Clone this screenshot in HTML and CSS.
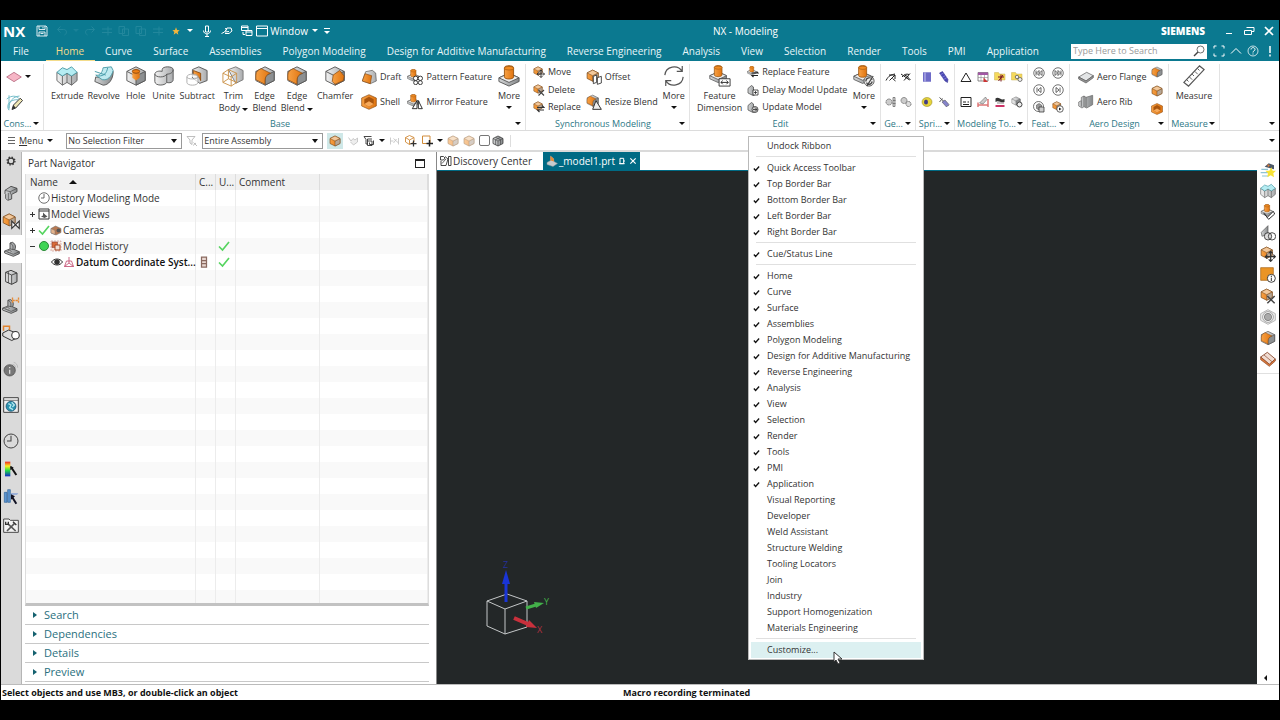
FILE: index.html
```html
<!DOCTYPE html>
<html lang="en">
<head>
<meta charset="utf-8">
<title>NX - Modeling</title>
<link rel="stylesheet" href="styles.css">
</head>
<body>
<svg class="defs" aria-hidden="true">
  <defs>
    <linearGradient id="gl" x1="0" x2="1"><stop offset="0" stop-color="#f2f2f2"/><stop offset="1" stop-color="#a9abad"/></linearGradient>
    <linearGradient id="gd" x1="0" x2="1"><stop offset="0" stop-color="#d4d6d7"/><stop offset="1" stop-color="#85888a"/></linearGradient>
    <linearGradient id="go" x1="0" x2="1"><stop offset="0" stop-color="#f7a145"/><stop offset="1" stop-color="#e0740f"/></linearGradient>
    <linearGradient id="heat" x1="0" y1="0" x2="0" y2="1"><stop offset="0" stop-color="#e22"/><stop offset=".3" stop-color="#fe2"/><stop offset=".6" stop-color="#2d4"/><stop offset="1" stop-color="#12c"/></linearGradient>
  </defs>
  <symbol id="extrude" viewBox="0 0 24 24"><path d="M1 8v9l6 5 5-3 5 3 6-5V8l-6 4-5-3-5 3z" fill="url(#gl)" stroke="#666"/><path d="M1 8l6-5 5 2 5-3 6 6-6 4-5-3-5 3z" fill="#b5ecf2" stroke="#4c9aa6"/><path d="M7 12v10M12 9v10M17 12v10" stroke="#666" fill="none"/></symbol>
  <symbol id="revolve" viewBox="0 0 24 24"><path d="M3 13c5 2 9-1 10-9l9 3c0 9-5 15-11 15L2 18z" fill="url(#gd)" stroke="#555"/><path d="M3 11c4 1 7-2 8-8l9-1 2 4c-2 7-6 11-12 10z" fill="#bfeaf0" stroke="#4c9aa6"/><path d="M2 7l12 4M6 12c6 0 9-3 10-9" stroke="#3f97a5" fill="none"/></symbol>
  <symbol id="cube" viewBox="0 0 24 24"><path d="M12 2l10 5v10l-10 5-10-5V7z" fill="url(#gl)" stroke="#555"/><path d="M12 12l10-5v10l-10 5z" fill="#8d9092" stroke="#555"/><path d="M2 7l10 5" stroke="#555"/></symbol>
  <symbol id="dcube" viewBox="0 0 24 24"><path d="M12 2l10 5v10l-10 5-10-5V7z" fill="url(#gd)" stroke="#333" stroke-width="1.500"/><path d="M2 7l10 5 10-5M12 12v10M7 4.500l10 5v10M17 4.500l-10 5v10" fill="none" stroke="#333"/></symbol>
  <symbol id="ocube" viewBox="0 0 24 24"><path d="M12 2l10 5v10l-10 5-10-5V7z" fill="url(#go)" stroke="#7b4a1b" stroke-width="1.300"/><path d="M12 12l10-5v10l-10 5z" fill="#b5a697" stroke="#7b4a1b"/><path d="M12 2l10 5-10 5L2 7z" fill="#f2c89b" stroke="#7b4a1b"/></symbol>
  <symbol id="hole" viewBox="0 0 24 24"><use href="#cube"/><path d="M8 6l4-2 4 2v8l-4 3-4-3z" fill="url(#go)"/><ellipse cx="12" cy="7" rx="4" ry="2" fill="#ee7d12" stroke="#8a4a10"/></symbol>
  <symbol id="unite" viewBox="0 0 24 24"><path d="M2 10c0-3 5-4 8-3V5c0-4 12-4 12 0v11c0 3-4 4-7 3-2 4-13 4-13-1z" fill="url(#gl)" stroke="#555"/><path d="M2 10c1 4 11 4 13 0 4 0 7-2 7-5" fill="none" stroke="#555"/><path d="M15 10v9" stroke="#555"/></symbol>
  <symbol id="subtract" viewBox="0 0 24 24"><path d="M7 5l7-3 9 4v11l-8 3-8-6z" fill="url(#gl)" stroke="#555"/><path d="M8 6l8 3v8c-1-4-4-6-8-6z" fill="url(#go)" stroke="#8a4a10"/><path d="M1 13c0-4 12-4 12 0v6c0 4-12 4-12 0zM1 13c0 3 12 3 12 0" fill="#fff" fill-opacity=".7" stroke="#aaa"/></symbol>
  <symbol id="trim" viewBox="0 0 24 24"><path d="M7 5l8-3 8 4v10l-8 4z" fill="url(#gl)" stroke="#777"/><path d="M1 9l6-4 9 4v10l-6 4-9-4zM1 9l9 4 6-4M10 13v10M7 5v10l9 4M7 15l-6 4" fill="none" stroke="#c99145"/></symbol>
  <symbol id="blend" viewBox="0 0 24 24"><use href="#cube"/><path d="M2 11c0-4 3-6 6-7l10 5c-4 1-6 4-6 8v4L2 16z" fill="url(#go)" stroke="#8a4a10" stroke-width=".8"/></symbol>
  <symbol id="chamfer" viewBox="0 0 24 24"><use href="#cube"/><path d="M10 11l7-5 5 6-1 5-9 4-3-3z" fill="url(#go)" stroke="#8a4a10" stroke-width=".8"/></symbol>
  <symbol id="draft" viewBox="0 0 24 24"><path d="M7 4l10-2 5 4 1 12-9 4-12-4z" fill="url(#gl)" stroke="#555"/><path d="M6 7l10 3-2 12-12-4z" fill="url(#go)" stroke="#8a4a10"/></symbol>
  <symbol id="shell" viewBox="0 0 24 24"><path d="M12 1l11 5v12l-11 5-11-5V6z" fill="url(#go)" stroke="#8a4a10"/><path d="M12 4l7 4v7l-7 4-7-4V8z" fill="#a9550d"/><path d="M5 15l7-4 7 4-7 4z" fill="#f6a95a"/></symbol>
  <symbol id="boss" viewBox="0 0 24 24"><path d="M1 14l11-5 11 5v4l-11 5-11-5z" fill="url(#gd)" stroke="#555"/><path d="M1 14l11 5 11-5-11-5z" fill="#eee" stroke="#555"/><path d="M7 3c0-3 10-3 10 0v10c0 3-10 3-10 0z" fill="url(#go)" stroke="#9b5510"/><ellipse cx="12" cy="3.500" rx="5" ry="2" fill="#f28d24" stroke="#9b5510" stroke-width=".7"/></symbol>
  <symbol id="pattern" viewBox="0 0 24 24"><use href="#boss" width="19" height="19"/><g fill="#fff" stroke="#222" stroke-width="1.300"><circle cx="13" cy="14" r="3.300"/><circle cx="20" cy="14" r="3.300"/><circle cx="13" cy="20.500" r="3"/><circle cx="20" cy="20.500" r="3"/></g></symbol>
  <symbol id="mirror" viewBox="0 0 24 24"><use href="#boss" width="19" height="19"/><path d="M15 10v12H8zM17 10v12h6z" fill="#fff" stroke="#222" stroke-width="1.400"/></symbol>
  <symbol id="move" viewBox="0 0 24 24"><use href="#ocube" width="20" height="20"/><path d="M16 8v15M8 16h15M13 11l3-3 3 3M13 20l3 3 3-3M11 13l-3 3 3 3M20 13l3 3-3 3" stroke="#333" stroke-width="1.800" fill="none"/></symbol>
  <symbol id="delete" viewBox="0 0 24 24"><use href="#ocube" width="20" height="20"/><path d="M11 12l11 11M22 12l-11 11" stroke="#444" stroke-width="2.200"/></symbol>
  <symbol id="replace" viewBox="0 0 24 24"><use href="#ocube" width="20" height="20"/><path d="M8 13h14l-4-4M22 18H9l4 4" stroke="#333" stroke-width="2.300" fill="none"/></symbol>
  <symbol id="offset" viewBox="0 0 24 24"><use href="#ocube" width="20" height="20"/><path d="M11 11l5-2v11l-5 2zM17 13l6-2v10l-6 2z" fill="#fff" stroke="#333" stroke-width="1.300"/></symbol>
  <symbol id="resize" viewBox="0 0 24 24"><use href="#blend" width="20" height="20"/><path d="M15 10l8 13H10z" fill="#eee" stroke="#333" stroke-width="1.500"/></symbol>
  <symbol id="cycle" viewBox="0 0 24 24"><path d="M2 11C3 1 16-1 21 7M21 1v6h-6M22 13c-1 10-14 12-19 4M3 23v-6h6" fill="none" stroke="#555" stroke-width="1.300"/></symbol>
  <symbol id="fdim" viewBox="0 0 24 24"><use href="#boss" width="20" height="20"/><path d="M11 15h12v8H11z" fill="#fff" stroke="#333"/><path d="M13 19h8M15 17l-2 2 2 2M19 17l2 2-2 2" fill="none" stroke="#222"/></symbol>
  <symbol id="fmore" viewBox="0 0 24 24"><use href="#boss" width="21" height="21"/><circle cx="17.500" cy="17.500" r="5.500" fill="#eee" stroke="#555"/><path d="M14 18c0-5 6-5 7-2M21 18c-1 4-6 4-6 1M22 12l-7 11" stroke="#444" fill="none" stroke-width="1.300"/></symbol>
  <symbol id="ofeat" viewBox="0 0 24 24"><use href="#boss" width="19" height="19"/><path d="M9 14h13l-3-3M22 19H10l3 3" stroke="#222" stroke-width="2.300" fill="none"/></symbol>
  <symbol id="gpart" viewBox="0 0 24 24"><path d="M2 9l7-6 4 3v6l7 3v5l-8 3-10-5z" fill="url(#gd)" stroke="#444" stroke-width="1.400"/><path d="M12 12h10v10H12z" fill="#fff" stroke="#222" stroke-width="1.500"/><path d="M14 17h6M17 14v6" stroke="#222" stroke-width="1.500"/></symbol>
  <symbol id="gpart2" viewBox="0 0 24 24"><path d="M2 9l7-6 4 3v6l7 3v5l-8 3-10-5z" fill="url(#gd)" stroke="#444" stroke-width="1.400"/><circle cx="16" cy="17" r="6" fill="#ccc" stroke="#333" stroke-width="1.500"/><path d="M12 17h8M16 13l4 4-4 4" fill="none" stroke="#222" stroke-width="1.500"/></symbol>
  <symbol id="plane" viewBox="0 0 24 24"><path d="M1 12l11-7 11 7-11 7z" fill="#f6b6c6" stroke="#a54e68"/></symbol>
  <symbol id="sketch" viewBox="0 0 24 24"><path d="M4 3v19M4 20C4 11 9 5 18 4M1 8c6-5 13-5 17 0M4 23c-5-7 2-15 12-14" fill="none" stroke="#69b7c4" stroke-width="1.200"/><path d="M8 22l2-6L19 7l3 3-9 10z" fill="#efe6b4" stroke="#333" stroke-width="1.300"/><path d="M8 22l2-6 3 4z" fill="#333"/></symbol>
  <symbol id="curveed" viewBox="0 0 24 24"><path d="M2 19C8 8 12 8 20 6M8 8h12v8M20 8L9 19M15 15l6 5" fill="none" stroke="#222" stroke-width="2"/></symbol>
  <symbol id="curvex" viewBox="0 0 24 24"><path d="M2 6l17 12M4 12c4-5 9-7 14-5M20 5L8 19M15 12l6 6M9 8l8 4" fill="none" stroke="#222" stroke-width="2"/></symbol>
  <symbol id="helix" viewBox="0 0 24 24"><circle cx="8" cy="12" r="6" fill="#ccc" stroke="#777" stroke-width="2" stroke-dasharray="3 1"/><path d="M16 3h4v18h-4zM16 9h5M15 15h6" fill="#ddd" stroke="#666" stroke-width="1.500"/></symbol>
  <symbol id="gears" viewBox="0 0 24 24"><circle cx="8" cy="9" r="6" fill="#ccc" stroke="#777" stroke-width="2" stroke-dasharray="3 1"/><circle cx="17" cy="16" r="5" fill="#ddd" stroke="#666" stroke-width="2" stroke-dasharray="2 1"/></symbol>
  <symbol id="spring" viewBox="0 0 24 24"><path d="M4 3h16v18H4z" fill="#8482d6"/><path d="M4 4h16M4 8h16M4 12h16M4 16h16M4 20h16" stroke="#4a46b0" stroke-width="1.500"/><path d="M8 3v18" stroke="#c7c5f2" stroke-width="2"/></symbol>
  <symbol id="spring2" viewBox="0 0 24 24"><path d="M3 4l6-3 11 16-1 6-5-3z" fill="#4b49b5" stroke="#2a2886"/><path d="M4 8l7-4M8 13l7-4M11 17l7-4" stroke="#aaa8ee"/></symbol>
  <symbol id="ring" viewBox="0 0 24 24"><ellipse cx="12" cy="12" rx="10" ry="9" fill="#e7d43b" stroke="#8a7d18"/><ellipse cx="10" cy="12" rx="4" ry="5" fill="#423d85"/></symbol>
  <symbol id="springx" viewBox="0 0 24 24"><path d="M3 3l18 16M3 12l6-7" stroke="#555" stroke-width="2"/><path d="M8 12l6-4 8 9-5 5z" fill="#8583ca" stroke="#444"/></symbol>
  <symbol id="tri" viewBox="0 0 24 24"><path d="M12 4l10 17H2z" fill="none" stroke="#222" stroke-width="2"/></symbol>
  <symbol id="sheet" viewBox="0 0 24 24"><path d="M2 3h20v17H2z" fill="#fff" stroke="#666" stroke-width="1.500"/><path d="M2 3h20v5H2z" fill="#a257a4"/><path d="M2 13h20M8 8v12M15 8v12" stroke="#777"/><path d="M13 13l9 9h-9z" fill="#c33"/></symbol>
  <symbol id="folder" viewBox="0 0 24 24"><path d="M1 3h8l2 3h11v12H1z" fill="#f5d95c" stroke="#c9b254"/><path d="M14 7v14M8 12h12M18 8l-9 12" stroke="#712" stroke-width="2"/></symbol>
  <symbol id="folder2" viewBox="0 0 24 24"><path d="M1 3h8l2 3h11v12H1z" fill="#f5d95c" stroke="#c9b254"/><circle cx="12" cy="12" r="3.500" fill="#eee" stroke="#555" stroke-width="1.500"/><circle cx="18" cy="17" r="4" fill="#eee" stroke="#555" stroke-width="1.500"/></symbol>
  <symbol id="form" viewBox="0 0 24 24"><path d="M2 3h20v18H2z" fill="#fff" stroke="#222" stroke-width="2"/><path d="M6 12h6M6 17h12M15 12h3" stroke="#222" stroke-width="2"/></symbol>
  <symbol id="dimred" viewBox="0 0 24 24"><path d="M2 13v9M22 6v16M3 18h18" stroke="#c33" stroke-width="2"/><path d="M5 14L17 2l3 5-8 9z" fill="#ccc" stroke="#555"/></symbol>
  <symbol id="stamp" viewBox="0 0 24 24"><path d="M3 5c6-5 11 5 18 1v6c-7 3-12-5-18 0z" fill="#333"/><path d="M6 14h14" stroke="#888" stroke-width="2"/><path d="M3 20h18" stroke="#c36" stroke-width="4"/></symbol>
  <symbol id="cubegear" viewBox="0 0 24 24"><use href="#cube" width="20" height="20"/><circle cx="17" cy="17" r="5" fill="#eee" stroke="#444" stroke-width="2"/></symbol>
  <symbol id="first" viewBox="0 0 24 24"><circle cx="12" cy="12" r="10.500" fill="#fff" stroke="#444" stroke-width="1.500"/><path d="M6 7v10M12 7l-5 5 5 5zM18 7l-5 5 5 5z" fill="none" stroke="#333" stroke-width="1.500"/></symbol>
  <symbol id="last" viewBox="0 0 24 24"><circle cx="12" cy="12" r="10.500" fill="#fff" stroke="#444" stroke-width="1.500"/><path d="M18 7v10M12 7l5 5-5 5zM6 7l5 5-5 5z" fill="none" stroke="#333" stroke-width="1.500"/></symbol>
  <symbol id="prev" viewBox="0 0 24 24"><circle cx="12" cy="12" r="10.500" fill="#fff" stroke="#444" stroke-width="1.500"/><path d="M8 7v10M16 7l-6 5 6 5z" fill="none" stroke="#333" stroke-width="1.500"/></symbol>
  <symbol id="next" viewBox="0 0 24 24"><circle cx="12" cy="12" r="10.500" fill="#fff" stroke="#444" stroke-width="1.500"/><path d="M16 7v10M8 7l6 5-6 5z" fill="none" stroke="#333" stroke-width="1.500"/></symbol>
  <symbol id="playcube" viewBox="0 0 24 24"><use href="#ocube" width="19" height="19"/><circle cx="16" cy="16" r="6.500" fill="#fff" stroke="#333" stroke-width="1.500"/><path d="M14 13v6l5-3z" fill="#222"/></symbol>
  <symbol id="ringcube" viewBox="0 0 24 24"><circle cx="11" cy="11" r="10" fill="#fff" stroke="#444" stroke-width="1.500"/><path d="M7 8l5-3 5 3v7l-5 3-5-3z" fill="#999" stroke="#444"/><path d="M12 12h10v10H12z" fill="#ccc" stroke="#333" stroke-width="1.500"/></symbol>
  <symbol id="flange" viewBox="0 0 24 24"><path d="M1 12l12-7 10 5-11 8z" fill="#e3e5e6" stroke="#555"/><path d="M1 12v3l11 6 11-8v-3l-11 8z" fill="#999" stroke="#555"/></symbol>
  <symbol id="rib" viewBox="0 0 24 24"><path d="M1 12l4-2V5l4-2 3 2 10-3v14l-9 5-4-2-3 2-5-3z" fill="url(#gd)" stroke="#666"/><path d="M9 3v16M12 5v15M5 10v9" stroke="#555"/></symbol>
  <symbol id="ruler" viewBox="0 0 24 24"><path d="M1 19L18 1l5 4L6 23z" fill="#fff" stroke="#555" stroke-width="1.300"/><path d="M4 16l2 2M7 13l3 3M10 10l2 2M13 7l3 3M16 4l2 2" stroke="#555"/></symbol>
  <symbol id="save" viewBox="0 0 24 24"><path d="M2 2h18l2 2v18H2zM6 2v7h12V2M6 22v-8h12v8M9 17h6M14 4v3" fill="none" stroke="#fff" stroke-width="1.700"/></symbol>
  <symbol id="mic" viewBox="0 0 24 24"><path d="M9 2h6v12H9zM5 11c0 9 14 9 14 0M12 18v5M8 23h8" fill="none" stroke="#fff" stroke-width="2"/></symbol>
  <symbol id="hand" viewBox="0 0 24 24"><path d="M1 17l6-3 5-6-4-1M8 17h8l6-5-2-6h-8M12 6l-3 6M8 14l8-1" fill="none" stroke="#fff" stroke-width="2"/></symbol>
  <symbol id="wins" viewBox="0 0 24 24"><path d="M1 2h13v9H1zM1 5h13M10 11h12v10H10zM10 14h12M4 14v5h4" fill="none" stroke="#fff" stroke-width="2"/></symbol>
  <symbol id="win" viewBox="0 0 24 24"><path d="M1 2h22v20H1zM1 7h22" fill="none" stroke="#fff" stroke-width="2"/></symbol>
  <symbol id="undo" viewBox="0 0 24 24"><path d="M9 3L3 9l6 6M3 9h12c8 0 7 9 2 11" fill="none" stroke="#3996a8" stroke-width="2"/></symbol>
  <symbol id="redo" viewBox="0 0 24 24"><path d="M15 3l6 6-6 6M21 9H9c-8 0-7 9-2 11" fill="none" stroke="#3996a8" stroke-width="2"/></symbol>
  <symbol id="cut" viewBox="0 0 24 24"><path d="M2 8h20M2 15h20M14 3v18" fill="none" stroke="#3996a8" stroke-width="2"/></symbol>
  <symbol id="copy" viewBox="0 0 24 24"><path d="M2 3h11v14H2zM9 8h12v13H9z" fill="none" stroke="#3996a8" stroke-width="2"/></symbol>
  <symbol id="star" viewBox="0 0 24 24"><path d="M12 1l3 8 8 1-6 5 2 8-7-5-7 5 2-8-6-5 8-1z" fill="#f4b63c"/></symbol>
  <symbol id="restore" viewBox="0 0 24 24"><path d="M7 5h15v8h-4M3 11h14v8H3z" fill="none" stroke="#fff" stroke-width="2"/></symbol>
  <symbol id="close" viewBox="0 0 24 24"><path d="M4 4l16 16M20 4L4 20" stroke="#fff" stroke-width="3.500"/></symbol>
  <symbol id="lens" viewBox="0 0 24 24"><circle cx="15" cy="9" r="7" fill="none" stroke="#444" stroke-width="1.500"/><path d="M10 14l-8 8" stroke="#444" stroke-width="3"/></symbol>
  <symbol id="full" viewBox="0 0 24 24"><path d="M7 2H2v5M17 2h5v5M7 22H2v-5M17 22h5v-5" fill="none" stroke="#fff" stroke-width="2"/></symbol>
  <symbol id="up" viewBox="0 0 24 24"><path d="M2 17l10-10 10 10" fill="none" stroke="#fff" stroke-width="2"/></symbol>
  <symbol id="help" viewBox="0 0 24 24"><circle cx="12" cy="12" r="10" fill="none" stroke="#fff" stroke-width="1.500"/><path d="M8 9c0-5 8-5 8 0 0 3-4 2-4 6M12 17v2" fill="none" stroke="#fff" stroke-width="2"/></symbol>
  <symbol id="bang" viewBox="0 0 24 24"><path d="M12 2v14M12 19v4" stroke="#fff" stroke-width="3"/></symbol>
  <symbol id="funnel" viewBox="0 0 24 24"><path d="M2 3h16l-6 7v9l-4-3v-6zM15 15l7 7M14 21l6-5" fill="none" stroke="#aaa" stroke-width="1.500"/></symbol>
  <symbol id="ghost" viewBox="0 0 24 24"><path d="M3 5l5 7 4-5 4 3 5-4v8l-8 6-6-6" fill="#eee" stroke="#bbb" stroke-width="1.500"/></symbol>
  <symbol id="snap" viewBox="0 0 24 24"><path d="M2 3h15M2 3l4 6v9h4M9 8h9M9 8v13h9V12H9M13 15v4h8v-8" fill="none" stroke="#333" stroke-width="1.800"/></symbol>
  <symbol id="ghost2" viewBox="0 0 24 24"><path d="M3 5v14M3 12h6M9 7l10 9M19 6v13M9 16l6-8" fill="none" stroke="#bbb" stroke-width="1.500"/></symbol>
  <symbol id="wirecube" viewBox="0 0 24 24"><path d="M9 1l9 4v9l-9 5-8-5V5zM1 5l8 5 9-5M9 10v9" fill="none" stroke="#d08b3a" stroke-width="1.800"/><path d="M17 11v12M11 17h12" stroke="#333" stroke-width="2.500"/></symbol>
  <symbol id="wireadd" viewBox="0 0 24 24"><path d="M3 2h15v15H3z" fill="#fff" stroke="#d08b3a" stroke-width="2"/><path d="M17 10v13M11 17h13" stroke="#222" stroke-width="3"/></symbol>
  <symbol id="gear" viewBox="0 0 24 24"><circle cx="12" cy="12" r="7" fill="none" stroke="#333" stroke-width="3"/><circle cx="12" cy="12" r="9.500" fill="none" stroke="#333" stroke-width="3" stroke-dasharray="3.500 4"/></symbol>
  <symbol id="asm" viewBox="0 0 24 24"><path d="M3 8l9-6 9 3v5l-8 4v7l-6 2-3-3v-6l-1-1z" fill="url(#gd)" stroke="#444" stroke-width="1.300"/><path d="M3 8l8 2 10-5M8 12v10M11 10v4" fill="none" stroke="#444"/></symbol>
  <symbol id="constr" viewBox="0 0 24 24"><use href="#ocube" width="19" height="21"/><path d="M13 12v10l10-10v10z" fill="#fff" stroke="#333" stroke-width="1.500"/></symbol>
  <symbol id="part" viewBox="0 0 24 24"><path d="M1 15l8-3V3l4-1c5 3 5 8 3 11l7 3v3l-9 4-13-5z" fill="url(#gd)" stroke="#444" stroke-width="1.300"/><path d="M1 15l13 5 9-4M9 12l7 1M9 3c5 2 5 7 4 10" fill="none" stroke="#444"/><ellipse cx="8" cy="15.500" rx="3" ry="1.200" fill="#eee" stroke="#444"/></symbol>
  <symbol id="book" viewBox="0 0 24 24"><path d="M4 5l8-3 9 4v13l-8 4-9-4z" fill="url(#gl)" stroke="#333" stroke-width="1.400"/><path d="M4 5l9 4 8-3M13 9v14M8 4v3M8 7v14" fill="none" stroke="#333" stroke-width="1.200"/></symbol>
  <symbol id="partplus" viewBox="0 0 24 24"><use href="#part" y="3" width="21" height="21"/><path d="M14 2v8M22 2v8M14 6h8" stroke="#e68a35" stroke-width="1.800" stroke-dasharray="3 1"/></symbol>
  <symbol id="weld" viewBox="0 0 24 24"><path d="M1 12l8-4 12 5v5l-8 4-12-6z" fill="#ddd" stroke="#333" stroke-width="1.300"/><path d="M2 9V3h8v5" fill="none" stroke="#e08430" stroke-width="2"/><circle cx="18" cy="15" r="5" fill="#fff" stroke="#333" stroke-width="1.400"/></symbol>
  <symbol id="info" viewBox="0 0 24 24"><circle cx="10" cy="14" r="8.500" fill="#777" stroke="#444"/><path d="M10 9v2M10 13v6" stroke="#ddd" stroke-width="2"/><path d="M16 2c4 1 6 4 6 8M14 5c3 0 5 2 5 5" fill="none" stroke="#aaa"/></symbol>
  <symbol id="web" viewBox="0 0 24 24"><path d="M1 1h22v22H1z" fill="#eee" stroke="#444" stroke-width="1.500"/><path d="M1 5h22" stroke="#444"/><circle cx="12" cy="14" r="7.500" fill="#2a91ad" stroke="#146"/><path d="M8 10l4 2-2 4 5 3M13 8l4 4-3 3" stroke="#b2e6ee" stroke-width="2" fill="none"/></symbol>
  <symbol id="clock" viewBox="0 0 24 24"><circle cx="12" cy="12" r="10.500" fill="none" stroke="#444" stroke-width="1.500"/><path d="M12 4v8H6" fill="none" stroke="#444" stroke-width="1.600"/></symbol>
  <symbol id="heatmap" viewBox="0 0 24 24"><path d="M3 1h8v22H3z" fill="url(#heat)"/><path d="M12 9l8 12" stroke="#111" stroke-width="3"/><path d="M11 7v7l5-4z" fill="#111"/></symbol>
  <symbol id="bars" viewBox="0 0 24 24"><path d="M2 5h4v15H2zM7 1h4v19H7z" fill="#5c94cf" stroke="#2f6299"/><path d="M12 6h11l-2 3h-9z" fill="#9bb0d8"/><path d="M13 11l7 11" stroke="#112" stroke-width="3"/><path d="M12 8v8l6-5z" fill="#112"/></symbol>
  <symbol id="tools" viewBox="0 0 24 24"><path d="M1 3h8l2 2h12v18H1z" fill="#f2f2f2" stroke="#333" stroke-width="1.300"/><path d="M7 10l12 11M17 10L6 21" stroke="#555" stroke-width="2.500"/><path d="M4 7v4h4V7M15 7l5 5" stroke="#333" stroke-width="2" fill="none"/></symbol>
  <symbol id="views" viewBox="0 0 24 24"><path d="M2 2h20v20H2zM2 6h20" fill="#fff" stroke="#333" stroke-width="2"/><path d="M6 17l4-2V9l5 5 4 3-6 3z" fill="#555"/></symbol>
  <symbol id="check" viewBox="0 0 24 24"><path d="M2 13l7 7L22 4" fill="none" stroke="#55d45f" stroke-width="3.300"/></symbol>
  <symbol id="tick" viewBox="0 0 24 24"><path d="M3 12l6 7L21 5" fill="none" stroke="#111" stroke-width="4.500"/></symbol>
  <symbol id="camera" viewBox="0 0 24 24"><path d="M2 9l9-5 11 5v8l-10 5L2 18z" fill="#b97a52" stroke="#666"/><path d="M2 9l8 4v8l-8-3z" fill="#e5b48d" stroke="#777"/><circle cx="17" cy="13" r="4" fill="#555"/></symbol>
  <symbol id="history" viewBox="0 0 24 24"><path d="M2 2h20v20H2z" fill="#f7e6dc" stroke="#b77" stroke-dasharray="4 2"/><path d="M4 4h11v11H4z" fill="#d96b38" stroke="#733"/><path d="M10 10h10v10H10z" fill="#f1ded4" stroke="#a54520" stroke-width="2"/></symbol>
  <symbol id="eye" viewBox="0 0 24 24"><path d="M1 12C6 4 18 4 23 12 18 20 6 20 1 12z" fill="#fff" stroke="#333" stroke-width="2"/><circle cx="12" cy="12" r="5.500" fill="#333"/></symbol>
  <symbol id="datum" viewBox="0 0 24 24"><path d="M12 2v12L3 21M12 14l9 7M7 10l-4 11h18l-4-11z" fill="none" stroke="#c0476c" stroke-width="1.600"/></symbol>
  <symbol id="layers" viewBox="0 0 24 24"><path d="M7 2h10v20H7zM7 9h10M7 15h10" fill="#e9d8d2" stroke="#8a6a60" stroke-width="2.500"/></symbol>
  <symbol id="disc" viewBox="0 0 24 24"><path d="M1 3h6l3 3-3 4H1zM10 3l6 5-4 13H2V12M17 3h5v18h-5z" fill="none" stroke="#333" stroke-width="1.800"/><path d="M4 17l8-9" stroke="#333" stroke-width="1.500"/></symbol>
  <symbol id="pin" viewBox="0 0 24 24"><path d="M6 4h11v8h4M17 12v8H6V4M3 20h17" fill="none" stroke="#fff" stroke-width="3"/></symbol>
  <symbol id="opart" viewBox="0 0 24 24"><path d="M2 15l7-4V2l6 5 1 6 7 4-9 6-12-4z" fill="#c7cccf" stroke="#8b9296"/><path d="M9 2l6 5 1 6-7-2z" fill="#e78a35"/></symbol>
  <symbol id="spark" viewBox="0 0 24 24"><path d="M2 11h10M1 16h12M3 21h10" stroke="#8ec3d6" stroke-width="1.800"/><path d="M7 7l6-5 8 3v6z" fill="#4d5968"/><path d="M11 3l4 2-3 3z" fill="#dd7a39"/><path d="M17 8l2 5h5l-4 4 1 6-5-3-5 3 1-6-4-4h6z" fill="#f8e336"/></symbol>
  <symbol id="edit" viewBox="0 0 24 24"><use href="#boss" width="21" height="19"/><path d="M6 14l5 6L20 11l2 4-9 8z" fill="#fff" stroke="#333" stroke-width="1.500"/></symbol>
  <symbol id="venn" viewBox="0 0 24 24"><path d="M2 11L12 1v12l-9 4z" fill="url(#gd)" stroke="#555"/><circle cx="12" cy="17" r="5.500" fill="#ddd" stroke="#333" stroke-width="1.300"/><circle cx="18" cy="17" r="5.500" fill="none" stroke="#333" stroke-width="1.300"/></symbol>
  <symbol id="isq" viewBox="0 0 24 24"><path d="M1 1h19v19H1z" fill="#ea9425" stroke="#a35f10"/><circle cx="17" cy="17" r="6" fill="#fff" stroke="#333" stroke-width="1.400"/><path d="M17 13v2M17 16v5" stroke="#333" stroke-width="1.500"/></symbol>
  <symbol id="nut" viewBox="0 0 24 24"><path d="M12 1l11 6v10l-11 6-11-6V7z" fill="#eee" stroke="#999"/><circle cx="12" cy="12" r="8" fill="#fff" stroke="#777"/><circle cx="12" cy="12" r="5.500" fill="#aaa" stroke="#666"/></symbol>
  <symbol id="slab" viewBox="0 0 24 24"><path d="M1 9l10-7 12 10-9 8z" fill="#f0dcd2" stroke="#85452a" stroke-width="1.300"/><path d="M1 9v4l13 10 9-8v-3l-9 8z" fill="#dd7a39" stroke="#85452a"/><path d="M6 6l12 10" fill="none" stroke="#85452a"/></symbol>
</svg>

<div class="app">
  <header class="titlebar">
    <div class="qat">
      <strong class="brand">NX</strong>
      <button class="ib" aria-label="Save"><svg class="i12"><use href="#save"/></svg></button>
      <div class="faint">
        <svg class="i12"><use href="#undo"/></svg><i class="caret dim"></i><svg class="i12"><use href="#redo"/></svg><svg class="i12"><use href="#cut"/></svg><svg class="i12"><use href="#copy"/></svg><svg class="i12"><use href="#copy"/></svg><svg class="i12"><use href="#cut"/></svg>
      </div>
      <button class="ib fav" aria-label="Favorites"><svg class="i8"><use href="#star"/></svg><i class="caret light"></i></button>
      <button class="ib" aria-label="Voice"><svg class="i12"><use href="#mic"/></svg></button>
      <button class="ib" aria-label="Touch"><svg class="i12"><use href="#hand"/></svg></button>
      <button class="ib" aria-label="Switch window"><svg class="i12"><use href="#wins"/></svg></button>
      <button class="ib window"><svg class="i12"><use href="#win"/></svg>Window<i class="caret light"></i></button>
      <button class="ib over" aria-label="Toolbar options"><i class="caret light"></i></button>
    </div>
    <h1 class="title">NX - Modeling</h1>
    <div class="sys">
      <strong class="siemens">SIEMENS</strong>
      <button class="ib min" aria-label="Minimize"><i></i></button>
      <button class="ib" aria-label="Restore"><svg class="i12"><use href="#restore"/></svg></button>
      <button class="ib" aria-label="Close"><svg class="i12"><use href="#close"/></svg></button>
    </div>
  </header>

  <nav class="tabs">
    <button>File</button><button class="on">Home</button><button>Curve</button><button>Surface</button><button>Assemblies</button><button>Polygon Modeling</button><button>Design for Additive Manufacturing</button><button>Reverse Engineering</button><button>Analysis</button><button>View</button><button>Selection</button><button>Render</button><button>Tools</button><button>PMI</button><button>Application</button>
    <div class="find">
      <label class="search"><input type="text" placeholder="Type Here to Search" aria-label="Search"><svg class="i12"><use href="#lens"/></svg></label>
      <button class="ib" aria-label="Full screen"><svg class="i12"><use href="#full"/></svg></button>
      <button class="ib" aria-label="Minimize ribbon"><svg class="i12"><use href="#up"/></svg></button>
      <button class="ib" aria-label="Help"><svg class="i12"><use href="#help"/></svg></button>
      <button class="ib" aria-label="Alerts"><svg class="i12"><use href="#bang"/></svg></button>
    </div>
  </nav>

  <section class="ribbon">
    <div class="group g-cons">
      <div class="body col">
        <button class="sm"><svg class="i16"><use href="#plane"/></svg><i class="caret"></i></button>
        <button class="sm"><svg class="i18"><use href="#sketch"/></svg></button>
      </div>
      <div class="foot"><span>Cons...</span><i class="caret"></i></div>
    </div>
    <div class="group g-base">
      <div class="body">
        <button class="big"><svg><use href="#extrude"/></svg>Extrude</button>
        <button class="big"><svg><use href="#revolve"/></svg>Revolve</button>
        <button class="big"><svg><use href="#hole"/></svg>Hole</button>
        <button class="big"><svg><use href="#unite"/></svg>Unite</button>
        <button class="big"><svg><use href="#subtract"/></svg>Subtract</button>
        <button class="big"><svg><use href="#trim"/></svg>Trim<span>Body <i class="caret"></i></span></button>
        <button class="big"><svg><use href="#blend"/></svg>Edge<span>Blend</span></button>
        <button class="big"><svg><use href="#blend"/></svg>Edge<span>Blend <i class="caret"></i></span></button>
        <button class="big"><svg><use href="#chamfer"/></svg>Chamfer</button>
        <div class="col">
          <button class="sm"><svg class="i16"><use href="#draft"/></svg>Draft</button>
          <button class="sm"><svg class="i16"><use href="#shell"/></svg>Shell</button>
        </div>
        <div class="col">
          <button class="sm"><svg class="i16"><use href="#pattern"/></svg>Pattern Feature</button>
          <button class="sm"><svg class="i16"><use href="#mirror"/></svg>Mirror Feature</button>
        </div>
        <button class="big push"><svg><use href="#boss"/></svg>More<i class="caret"></i></button>
      </div>
      <div class="foot"><span>Base</span><i class="caret"></i></div>
    </div>
    <div class="group g-sync">
      <div class="body">
        <div class="col tight">
          <button class="sm"><svg class="i12"><use href="#move"/></svg>Move</button>
          <button class="sm"><svg class="i12"><use href="#delete"/></svg>Delete</button>
          <button class="sm"><svg class="i12"><use href="#replace"/></svg>Replace</button>
        </div>
        <div class="col">
          <button class="sm"><svg class="i16"><use href="#offset"/></svg>Offset</button>
          <button class="sm"><svg class="i16"><use href="#resize"/></svg>Resize Blend</button>
        </div>
        <button class="big push"><svg><use href="#cycle"/></svg>More<i class="caret"></i></button>
      </div>
      <div class="foot"><span>Synchronous Modeling</span><i class="caret"></i></div>
    </div>
    <div class="group g-edit">
      <div class="body">
        <button class="big"><svg><use href="#fdim"/></svg>Feature<span>Dimension</span></button>
        <div class="col tight">
          <button class="sm"><svg class="i12"><use href="#ofeat"/></svg>Replace Feature</button>
          <button class="sm"><svg class="i12"><use href="#gpart"/></svg>Delay Model Update</button>
          <button class="sm"><svg class="i12"><use href="#gpart2"/></svg>Update Model</button>
        </div>
        <button class="big push"><svg><use href="#fmore"/></svg>More<i class="caret"></i></button>
      </div>
      <div class="foot"><span>Edit</span><i class="caret"></i></div>
    </div>
    <div class="group g-gear">
      <div class="body tiles two">
        <svg class="i12"><use href="#curveed"/></svg><svg class="i12"><use href="#curvex"/></svg>
        <svg class="i12"><use href="#helix"/></svg><svg class="i12"><use href="#gears"/></svg>
      </div>
      <div class="foot"><span>Ge...</span><i class="caret"></i></div>
    </div>
    <div class="group g-spring">
      <div class="body tiles two">
        <svg class="i12"><use href="#spring"/></svg><svg class="i12"><use href="#spring2"/></svg>
        <svg class="i12"><use href="#ring"/></svg><svg class="i12"><use href="#springx"/></svg>
      </div>
      <div class="foot"><span>Spri...</span><i class="caret"></i></div>
    </div>
    <div class="group g-tools">
      <div class="body tiles four">
        <svg class="i12"><use href="#tri"/></svg><svg class="i12"><use href="#sheet"/></svg><svg class="i12"><use href="#folder"/></svg><svg class="i12"><use href="#folder2"/></svg>
        <svg class="i12"><use href="#form"/></svg><svg class="i12"><use href="#dimred"/></svg><svg class="i12"><use href="#stamp"/></svg><svg class="i12"><use href="#cubegear"/></svg>
      </div>
      <div class="foot"><span>Modeling To...</span><i class="caret"></i></div>
    </div>
    <div class="group g-feat">
      <div class="body tiles two three-rows">
        <svg class="i12"><use href="#first"/></svg><svg class="i12"><use href="#last"/></svg>
        <svg class="i12"><use href="#prev"/></svg><svg class="i12"><use href="#next"/></svg>
        <svg class="i12"><use href="#ringcube"/></svg><svg class="i12"><use href="#playcube"/></svg>
      </div>
      <div class="foot"><span>Feat...</span><i class="caret"></i></div>
    </div>
    <div class="group g-aero">
      <div class="body">
        <div class="col">
          <button class="sm"><svg class="i16"><use href="#flange"/></svg>Aero Flange</button>
          <button class="sm"><svg class="i16"><use href="#rib"/></svg>Aero Rib</button>
        </div>
        <div class="col cubes push">
          <svg class="i12"><use href="#blend"/></svg><svg class="i12"><use href="#ocube"/></svg><svg class="i12"><use href="#shell"/></svg>
        </div>
      </div>
      <div class="foot"><span>Aero Design</span><i class="caret"></i></div>
    </div>
    <div class="group g-meas">
      <div class="body center">
        <button class="big"><svg><use href="#ruler"/></svg>Measure</button>
      </div>
      <div class="foot"><span>Measure</span><i class="caret"></i></div>
    </div>
    <button class="ib ribbon-end" aria-label="Ribbon options"><i class="caret"></i></button>
  </section>

  <section class="borderbar">
    <button class="ib menu-btn"><i class="burger"></i><span><u>M</u>enu</span><i class="caret"></i></button>
    <span class="pick"><select aria-label="Selection filter"><option>No Selection Filter</option></select></span>
    <svg class="i12"><use href="#funnel"/></svg>
    <span class="pick"><select aria-label="Selection scope"><option>Entire Assembly</option></select></span>
    <span class="lit"><svg class="i12"><use href="#ocube"/></svg></span>
    <svg class="i12"><use href="#ghost"/></svg>
    <span class="pair"><svg class="i12"><use href="#snap"/></svg><i class="caret"></i></span>
    <svg class="i12"><use href="#ghost2"/></svg>
    <svg class="i12"><use href="#wirecube"/></svg>
    <span class="pair"><svg class="i12"><use href="#wireadd"/></svg><i class="caret"></i></span>
    <svg class="i12 soft"><use href="#ocube"/></svg>
    <svg class="i12 soft"><use href="#ocube"/></svg>
    <span class="pair last"><i class="box"></i><svg class="i12"><use href="#dcube"/></svg></span>
    <button class="ib bar-end" aria-label="Bar options"><i class="caret"></i></button>
  </section>

  <main class="work">
    <nav class="rail left">
      <button aria-label="Settings" class="gear"><svg><use href="#gear"/></svg></button>
      <button aria-label="Assembly Navigator"><svg class="i16"><use href="#asm"/></svg></button>
      <button aria-label="Constraint Navigator"><svg class="i18"><use href="#constr"/></svg></button>
      <button aria-label="Part Navigator" class="on"><svg class="i16"><use href="#part"/></svg></button>
      <button aria-label="Reuse Library"><svg class="i16"><use href="#book"/></svg></button>
      <button aria-label="Feature Library"><svg class="i18"><use href="#partplus"/></svg></button>
      <button aria-label="Weld Library"><svg class="i18"><use href="#weld"/></svg></button>
      <button aria-label="Information" class="gap"><svg class="i16"><use href="#info"/></svg></button>
      <button aria-label="Web Browser" class="gap"><svg class="i16"><use href="#web"/></svg></button>
      <button aria-label="History" class="gap"><svg class="i16"><use href="#clock"/></svg></button>
      <button aria-label="Process Studio"><svg class="i16"><use href="#heatmap"/></svg></button>
      <button aria-label="Manufacturing"><svg class="i16"><use href="#bars"/></svg></button>
      <button aria-label="Roles"><svg class="i16"><use href="#tools"/></svg></button>
    </nav>

    <section class="panel">
      <div class="panel-head"><h2>Part Navigator</h2><button class="ib maxi" aria-label="Maximize"></button></div>
      <div class="tree">
        <table>
          <colgroup><col class="c1"><col class="c2"><col class="c3"><col class="c4"><col></colgroup>
          <thead><tr><th>Name <i class="sort"></i></th><th>C...</th><th>U...</th><th>Comment</th><th></th></tr></thead>
          <tbody>
            <tr><td><span class="node"><i class="exp"></i><svg class="i12"><use href="#clock"/></svg>History Modeling Mode</span></td><td></td><td></td><td></td><td></td></tr>
            <tr><td><span class="node"><i class="exp plus"></i><svg class="i12"><use href="#views"/></svg>Model Views</span></td><td></td><td></td><td></td><td></td></tr>
            <tr><td><span class="node"><i class="exp plus"></i><svg class="i12"><use href="#check"/></svg><svg class="i12"><use href="#camera"/></svg>Cameras</span></td><td></td><td></td><td></td><td></td></tr>
            <tr><td><span class="node"><i class="exp minus"></i><i class="dot"></i><svg class="i12"><use href="#history"/></svg>Model History</span></td><td></td><td><svg class="i12"><use href="#check"/></svg></td><td></td><td></td></tr>
            <tr><td><span class="node deep"><svg class="i12"><use href="#eye"/></svg><svg class="i12"><use href="#datum"/></svg><b>Datum Coordinate Syst...</b></span></td><td><svg class="i12"><use href="#layers"/></svg></td><td><svg class="i12"><use href="#check"/></svg></td><td></td><td></td></tr>
            <tr><td></td><td></td><td></td><td></td><td></td></tr>
            <tr><td></td><td></td><td></td><td></td><td></td></tr>
            <tr><td></td><td></td><td></td><td></td><td></td></tr>
            <tr><td></td><td></td><td></td><td></td><td></td></tr>
            <tr><td></td><td></td><td></td><td></td><td></td></tr>
            <tr><td></td><td></td><td></td><td></td><td></td></tr>
            <tr><td></td><td></td><td></td><td></td><td></td></tr>
            <tr><td></td><td></td><td></td><td></td><td></td></tr>
            <tr><td></td><td></td><td></td><td></td><td></td></tr>
            <tr><td></td><td></td><td></td><td></td><td></td></tr>
            <tr><td></td><td></td><td></td><td></td><td></td></tr>
            <tr><td></td><td></td><td></td><td></td><td></td></tr>
            <tr><td></td><td></td><td></td><td></td><td></td></tr>
            <tr><td></td><td></td><td></td><td></td><td></td></tr>
            <tr><td></td><td></td><td></td><td></td><td></td></tr>
            <tr><td></td><td></td><td></td><td></td><td></td></tr>
            <tr><td></td><td></td><td></td><td></td><td></td></tr>
            <tr><td></td><td></td><td></td><td></td><td></td></tr>
            <tr><td></td><td></td><td></td><td></td><td></td></tr>
            <tr><td></td><td></td><td></td><td></td><td></td></tr>
            <tr><td></td><td></td><td></td><td></td><td></td></tr>
          </tbody>
        </table>
      </div>
      <div class="folds">
        <button aria-expanded="false">Search</button>
        <button aria-expanded="false">Dependencies</button>
        <button aria-expanded="false">Details</button>
        <button aria-expanded="false">Preview</button>
      </div>
    </section>

    <section class="view">
      <div class="docs">
        <button><svg class="i12"><use href="#disc"/></svg>Discovery Center</button>
        <button class="on"><svg class="i12"><use href="#opart"/></svg><span>_model1.prt</span><svg class="i8"><use href="#pin"/></svg><svg class="i8"><use href="#close"/></svg></button>
      </div>
      <div class="canvas">
        <svg class="triad" viewBox="0 0 70 76">
          <path d="M2 41l20-7 20 7v26l-22 7-18-8zM2 41l18 8 22-8M20 49v25" fill="none" stroke="#c4c7c8"/>
          <path d="M21 42V22" stroke="#1a35d6" stroke-width="3"/><path d="M21 10l4 14h-8z" fill="#1a35d6"/>
          <path d="M41 48l10-3" stroke="#43b04a" stroke-width="3"/><path d="M59 43l-10-1 2 6z" fill="#43b04a"/>
          <path d="M29 58l14 6" stroke="#c8303c" stroke-width="4"/><path d="M52 68l-8-8-3 7z" fill="#c8303c"/>
          <text x="18" y="8" fill="#25309c">Z</text><text x="59" y="45" fill="#43b04a">Y</text><text x="52" y="73" fill="#b03040">X</text>
        </svg>
      </div>
    </section>

    <nav class="rail right">
      <button aria-label="Favorites"><svg class="i16"><use href="#spark"/></svg></button>
      <button aria-label="Extrude"><svg class="i16"><use href="#extrude"/></svg></button>
      <button aria-label="Edit"><svg class="i16"><use href="#edit"/></svg></button>
      <button aria-label="Compare"><svg class="i16"><use href="#venn"/></svg></button>
      <button aria-label="Move"><svg class="i16"><use href="#move"/></svg></button>
      <button aria-label="Information"><svg class="i16"><use href="#isq"/></svg></button>
      <button aria-label="Delete"><svg class="i16"><use href="#delete"/></svg></button>
      <button aria-label="Fastener"><svg class="i16"><use href="#nut"/></svg></button>
      <button aria-label="Blend"><svg class="i16"><use href="#blend"/></svg></button>
      <button aria-label="Sheet"><svg class="i16"><use href="#slab"/></svg></button>
      <hr>
      <i class="caret-left"></i>
    </nav>
  </main>

  <footer class="status"><span>Select objects and use MB3, or double-click an object</span><span>Macro recording terminated</span></footer>
</div>

<div class="context" role="menu">
  <button role="menuitem">Undock Ribbon</button>
  <hr>
  <button role="menuitem"><svg><use href="#tick"/></svg>Quick Access Toolbar</button>
  <button role="menuitem"><svg><use href="#tick"/></svg>Top Border Bar</button>
  <button role="menuitem"><svg><use href="#tick"/></svg>Bottom Border Bar</button>
  <button role="menuitem"><svg><use href="#tick"/></svg>Left Border Bar</button>
  <button role="menuitem"><svg><use href="#tick"/></svg>Right Border Bar</button>
  <hr>
  <button role="menuitem"><svg><use href="#tick"/></svg>Cue/Status Line</button>
  <hr>
  <button role="menuitem"><svg><use href="#tick"/></svg>Home</button>
  <button role="menuitem"><svg><use href="#tick"/></svg>Curve</button>
  <button role="menuitem"><svg><use href="#tick"/></svg>Surface</button>
  <button role="menuitem"><svg><use href="#tick"/></svg>Assemblies</button>
  <button role="menuitem"><svg><use href="#tick"/></svg>Polygon Modeling</button>
  <button role="menuitem"><svg><use href="#tick"/></svg>Design for Additive Manufacturing</button>
  <button role="menuitem"><svg><use href="#tick"/></svg>Reverse Engineering</button>
  <button role="menuitem"><svg><use href="#tick"/></svg>Analysis</button>
  <button role="menuitem"><svg><use href="#tick"/></svg>View</button>
  <button role="menuitem"><svg><use href="#tick"/></svg>Selection</button>
  <button role="menuitem"><svg><use href="#tick"/></svg>Render</button>
  <button role="menuitem"><svg><use href="#tick"/></svg>Tools</button>
  <button role="menuitem"><svg><use href="#tick"/></svg>PMI</button>
  <button role="menuitem"><svg><use href="#tick"/></svg>Application</button>
  <button role="menuitem">Visual Reporting</button>
  <button role="menuitem">Developer</button>
  <button role="menuitem">Weld Assistant</button>
  <button role="menuitem">Structure Welding</button>
  <button role="menuitem">Tooling Locators</button>
  <button role="menuitem">Join</button>
  <button role="menuitem">Industry</button>
  <button role="menuitem">Support Homogenization</button>
  <button role="menuitem">Materials Engineering</button>
  <hr>
  <button role="menuitem" class="hot">Customize...</button>
</div>
<svg class="pointer" viewBox="0 0 10 14" aria-hidden="true"><path d="M1 1v10l2-2 2 4 2-1-2-4h4z" fill="#fff" stroke="#333"/></svg>
</body>
</html>
```

FILE: styles.css
```css
* { box-sizing: border-box; }
html, body { height: 100%; }
body {
  margin: 0;
  padding: 20px 1px;
  background: #000;
  color: #333;
  font: 9px/12px "Open Sans", "Noto Sans", sans-serif;
  display: flex;
  overflow: hidden;
}
button, input, select { font: inherit; color: inherit; border: 0; background: none; padding: 0; margin: 0; }
svg { display: block; flex: none; }
h1, h2 { margin: 0; font-size: 10px; font-weight: 400; }
.defs { position: absolute; width: 0; height: 0; }
.i8 { width: 8px; height: 8px; }
.i12 { width: 12px; height: 12px; }
.i16 { width: 16px; height: 16px; }
.i18 { width: 18px; height: 18px; }
.ib { display: inline-flex; align-items: center; gap: 4px; }
.col { display: flex; flex-direction: column; }

.caret {
  display: inline-block;
  flex: none;
  border: solid transparent;
  border-width: 3px 3px 0;
  border-top-color: #111;
}
.caret.light { border-top-color: #fff; }
.caret.dim { border-top-color: #2b8ba0; }

.app { flex: 1; min-width: 0; display: flex; flex-direction: column; background: #fff; }

/* Title bar */
.titlebar { display: flex; align-items: center; height: 21px; background: #0b7990; color: #fff; font-size: 10px; }
.qat { display: flex; align-items: center; gap: 8px; padding-left: 2px; }
.brand { font: 700 15px/20px "Open Sans", sans-serif; margin-right: 3px; }
.faint { display: flex; align-items: center; gap: 5px; opacity: .5; }
.fav { gap: 7px; }
.window { gap: 2px; margin-left: -5px; }
.window .caret { margin-left: 2px; }
.over { border-top: 1px solid #fff; padding-top: 2px; margin-left: -2px; }
.title { flex: 1; text-align: center; }
.sys { display: flex; align-items: center; gap: 8px; padding-right: 4px; }
.siemens { margin-right: 13px; font-weight: 800; }
.min i { width: 6px; height: 6px; margin-right: 3px; border-bottom: 1px solid #fff; }

/* Ribbon tabs */
.tabs { display: flex; height: 20px; background: #0b7990; color: #e8f6f9; font-size: 10px; }
.tabs > button { padding: 0 11px 0 10px; border-bottom: 1px solid transparent; white-space: nowrap; }
.tabs > button:first-child { padding-left: 12px; margin-right: 6px; }
.tabs > .on { color: #f3dc8b; border-color: #f3dc8b; }
.find { margin-left: auto; display: flex; align-items: center; gap: 5px; padding-right: 3px; }
.search { display: flex; align-items: center; width: 136px; height: 15px; margin-right: 1px; padding-right: 2px; background: #fff; }
.search input { flex: 1; min-width: 0; padding-left: 2px; font-size: 9px; outline: 0; }
.search input::placeholder { color: #9a9a9a; opacity: 1; }

/* Ribbon groups */
.ribbon { display: flex; height: 70px; padding-top: 3px; border-bottom: 1px solid #dcdcdc; }
.group { flex: none; display: flex; flex-direction: column; border-right: 1px solid #e3e3e3; }
.body { flex: 1; display: flex; gap: 6px; padding: 0 5px; }
.body > .col, .body.col { justify-content: space-around; align-items: flex-start; padding-bottom: 2px; }
.body.col { gap: 0; }
.body > .tight { justify-content: space-between; padding-bottom: 2px; }
.body > .cubes { justify-content: space-between; padding: 2px 2px 2px 0; }
.body.center { justify-content: center; }
.foot { display: flex; align-items: center; height: 13px; padding: 0 4px 0 1px; color: #2d7886; white-space: nowrap; }
.foot span { flex: 1; text-align: center; }
.big { display: flex; flex-direction: column; align-items: center; min-width: 22px; white-space: nowrap; }
.big svg { width: 22px; height: 22px; margin: 1px 0 3px; }
.big > .caret { margin-top: 4px; }
.sm { display: flex; align-items: center; gap: 3px; height: 16px; white-space: nowrap; }
.push { margin-left: auto; }
.g-cons { width: 43px; }
.g-base { width: 482px; }
.g-sync { width: 164px; }
.g-edit { width: 191px; }
.g-gear { width: 35px; }
.g-spring { width: 39px; }
.g-tools { width: 73px; }
.g-feat { width: 42px; }
.g-aero { width: 99px; }
.g-meas { width: 51px; }
.g-base .body { padding: 0 5px 0 8px; }
.g-base .big + .col { margin-left: 3px; }
.g-sync .body, .g-edit .body { padding-left: 7px; gap: 5px; }
.g-aero .body { padding-left: 8px; gap: 4px; }
.body.tiles { display: grid; gap: 0; padding: 0 2px 2px; place-items: center; }
.two { grid-template-columns: 1fr 1fr; }
.four { grid-template-columns: repeat(4, 1fr); }
.ribbon-end { margin: auto 4px 5px auto; }

/* Border bar */
.borderbar { display: flex; align-items: center; gap: 4px; height: 21px; padding: 0 4px 0 7px; border-bottom: 2px solid #dadada; }
.menu-btn { margin-right: 9px; }
.burger { width: 7px; height: 7px; border: solid #666; border-width: 1px 0; background: linear-gradient(#666, #666) 0 2px / 100% 1px no-repeat; }
.pick { position: relative; border: 1px solid #999; height: 16px; width: 116px; }
.pick + svg + .pick { width: 121px; }
.pick select { display: block; appearance: none; width: 100%; height: 100%; padding-left: 1px; outline: 0; }
.pick::after { content: ""; position: absolute; right: 4px; top: 5px; border: solid transparent; border-width: 4px 3px 0; border-top-color: #111; pointer-events: none; }
.lit { padding: 2px; background: #cfe8e8; }
.pair { display: flex; align-items: center; gap: 4px; }
.soft { opacity: .55; }
.box { width: 11px; height: 11px; border: 1px solid #777; border-radius: 2px; }
.last { gap: 2px; padding-right: 6px; border-right: 1px solid #ddd; }
.bar-end { margin-left: auto; }

/* Work area */
.work { flex: 1; min-height: 0; display: flex; border-bottom: 1px solid #bbb; }
.rail { flex: none; display: flex; flex-direction: column; }
.rail button { display: grid; place-items: center; flex: none; }
.left { width: 21px; background: #dadada; border-right: 1px solid #b5b5b5; }
.left button { height: 28px; }
.left .gear { height: 18px; margin-bottom: 9px; }
.gear svg { width: 10px; height: 10px; }
.left .on { background: #fff; margin-right: -1px; }
.left .gap { margin-top: 8px; }
.right { width: 22px; padding-top: 7px; }
.right button { height: 21px; }
.right hr { width: 100%; height: 1px; margin: 4px 0 0; border: 0; background: #e0e0e0; }
.caret-left { margin: auto auto 3px 7px; border: solid transparent; border-width: 3px 3px 3px 0; border-right-color: #111; }

.panel { flex: none; width: 415px; display: flex; flex-direction: column; padding: 0 7px 0 3px; border-right: 1px solid #888; }
.panel-head { display: flex; align-items: center; justify-content: space-between; height: 22px; padding: 0 4px 0 3px; }
.maxi { width: 10px; height: 9px; border: 1px solid #222; border-top-width: 2px; }
.tree { flex: 1; min-height: 0; overflow: hidden; border: 1px solid #ddd; border-top: 0; border-bottom: 3px solid #c2c2c2; }
table { width: 100%; table-layout: fixed; border-collapse: separate; border-spacing: 0; font-size: 10px; }
.c1 { width: 170px; }
.c2 { width: 20px; }
.c3 { width: 20px; }
.c4 { width: 84px; }
th, td { height: 16px; padding: 0 0 0 3px; text-align: left; font-weight: 400; white-space: nowrap; border-right: 1px solid #ececec; }
td { padding-left: 2px; }
th { background: #f1f1f1; border-color: #ddd; }
th:first-child, td:first-child { padding-left: 4px; }
tbody tr:nth-child(even) { background: #f9f9f9; }
.sort { display: inline-block; margin: 0 0 2px 8px; border: solid transparent; border-width: 0 4px 4px; border-bottom-color: #111; }
.node { display: flex; align-items: center; }
.node svg:last-of-type { margin-right: 1px; }
.deep { padding-left: 21px; }
.deep b { color: #111; font-weight: 600; }
.exp { width: 8px; height: 8px; }
.plus { background: linear-gradient(#333, #333) 0 4px / 5px 1px no-repeat, linear-gradient(#333, #333) 2px 2px / 1px 5px no-repeat; }
.minus { background: linear-gradient(#333, #333) 0 4px / 5px 1px no-repeat; }
.dot { width: 10px; height: 10px; margin: 0 1px; border: 1px solid #2b8a37; border-radius: 50%; background: #3fd455; }

.folds { display: flex; flex-direction: column; padding-bottom: 2px; }
.folds button { display: flex; align-items: center; gap: 7px; height: 19px; padding-left: 8px; border-bottom: 1px solid #c8c8c8; color: #2a6f7e; font-size: 11px; }
.folds button::before { content: ""; border: solid transparent; border-width: 3px 0 3px 4px; border-left-color: #14616f; }

.view { flex: 1; min-width: 0; display: flex; flex-direction: column; }
.docs { display: flex; height: 19px; border-bottom: 1px solid #006a84; font-size: 10px; gap: 8px; }
.docs button { display: flex; align-items: center; gap: 1px; padding: 0 3px; }
.docs .on { gap: 3px; background: #006a84; color: #fff; }
.docs .on .i12 { margin-right: -2px; }
.canvas { position: relative; flex: 1; background: #232728; }
.triad { position: absolute; left: 48px; bottom: 48px; width: 70px; height: 76px; overflow: visible; font-size: 9px; }

.status { display: grid; grid-template-columns: 621px 1fr; align-items: center; height: 15px; padding-left: 1px; color: #111; font-weight: 700; }

/* Ribbon context menu */
.context { position: absolute; left: 748px; top: 136px; width: 176px; padding: 1px 2px; background: #fff; border: 1px solid #b9b9b9; display: flex; flex-direction: column; }
.context button { display: flex; align-items: center; gap: 7px; height: 16px; padding-left: 16px; }
.context button:has(svg) { padding-left: 2px; }
.context svg { width: 7px; height: 7px; }
.context hr { width: auto; align-self: stretch; height: 1px; margin: 2px 5px 3px; border: 0; background: #e0e0e0; }
.context .hot { background: #dcf0f1; }
.pointer { position: absolute; left: 833px; top: 651px; width: 10px; height: 14px; }
```
